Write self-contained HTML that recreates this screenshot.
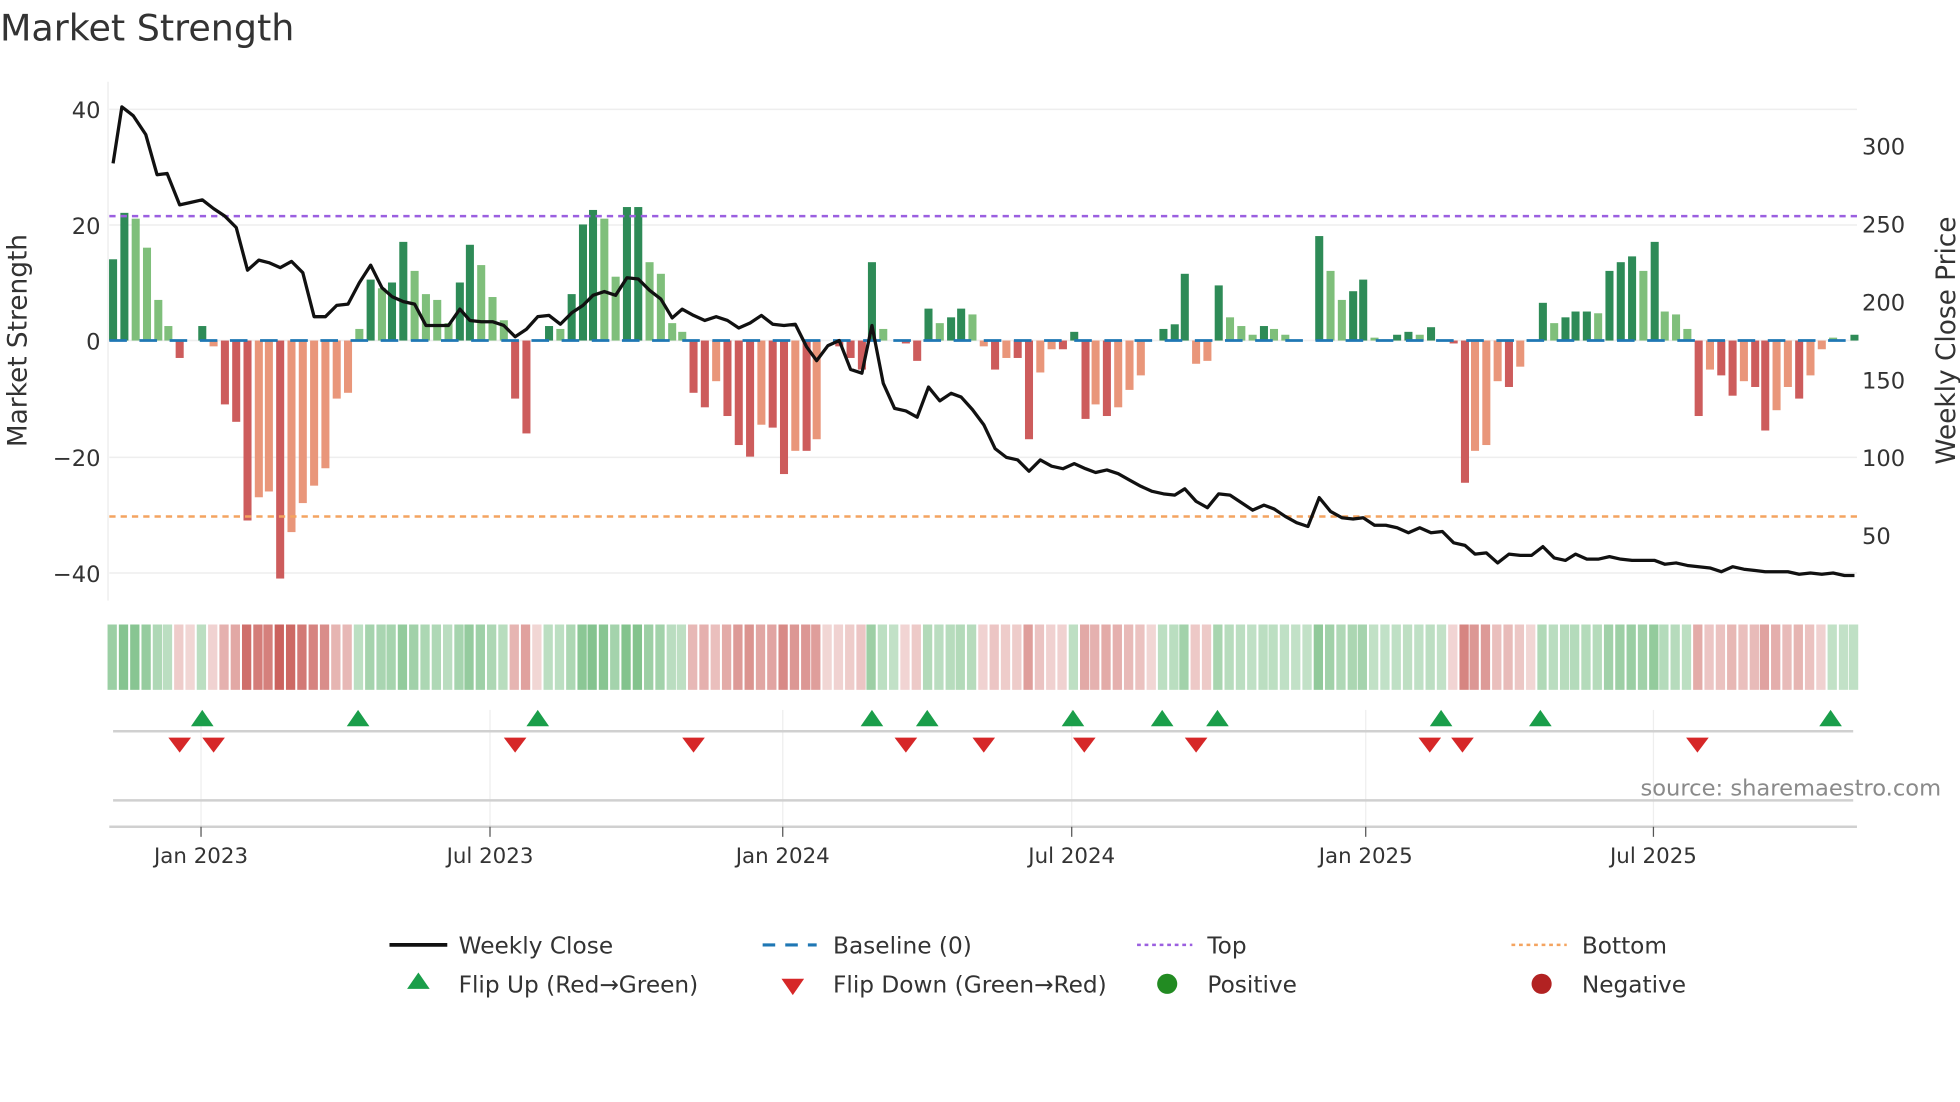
<!DOCTYPE html>
<html><head><meta charset="utf-8">
<style>
html,body{margin:0;padding:0;background:#fff;overflow:hidden}
svg{display:block}
text{font-family:"DejaVu Sans","Liberation Sans",sans-serif;fill:#333}
</style></head>
<body>
<svg id="s" width="1960" height="1102" viewBox="0 0 1560 877" xmlns="http://www.w3.org/2000/svg">
<rect width="1560" height="877" fill="#fff"/>
<text x="0" y="32" font-size="29" fill="#333">Market Strength</text>
<g id="grid"></g>
<g id="bars"></g>
<g id="heat"></g>
<g id="marks"></g>
<g id="axes"></g>
<g font-size="18.5">
<line x1="310" y1="752" x2="356" y2="752" stroke="#111" stroke-width="3"/>
<text x="365" y="759">Weekly Close</text>
<line x1="607" y1="752" x2="650" y2="752" stroke="#1f77b4" stroke-width="2.5" stroke-dasharray="10,8"/>
<text x="663" y="759">Baseline (0)</text>
<line x1="905" y1="752" x2="949" y2="752" stroke="#9b5fe0" stroke-width="2" stroke-dasharray="3,3"/>
<text x="961" y="759">Top</text>
<line x1="1203" y1="752" x2="1247" y2="752" stroke="#f4a460" stroke-width="2" stroke-dasharray="3,3"/>
<text x="1259" y="759">Bottom</text>
<polygon points="324,787 342,787 333,774" fill="#1a9e4a"/>
<text x="365" y="790">Flip Up (Red→Green)</text>
<polygon points="622,779 640,779 631,792" fill="#d62728"/>
<text x="663" y="790">Flip Down (Green→Red)</text>
<circle cx="929" cy="783" r="8" fill="#228b22"/>
<text x="961" y="790">Positive</text>
<circle cx="1227" cy="783" r="8" fill="#b22222"/>
<text x="1259" y="790">Negative</text>
</g>
<text x="1545" y="633" font-size="18" text-anchor="end" style="fill:#8a8a8a">source: sharemaestro.com</text>
<text transform="translate(21,271) rotate(-90)" font-size="21" text-anchor="middle">Market Strength</text>
<text transform="translate(1556,271) rotate(-90)" font-size="21" text-anchor="middle">Weekly Close Price</text>
</svg>
<script>
var NS="http://www.w3.org/2000/svg";
function el(p,t,a,txt){var e=document.createElementNS(NS,t);for(var k in a)e.setAttribute(k,a[k]);if(txt!=null)e.textContent=txt;document.getElementById(p).appendChild(e);return e;}
var Z=271,U=4.62;
[87,179,271,364,456].forEach(function(y){el("grid","line",{x1:87,x2:1478,y1:y,y2:y,stroke:"#eee","stroke-width":1.2});});
var lt=[["40",87],["20",179],["0",271],["\u221220",364],["\u221240",456]];
lt.forEach(function(a){el("axes","text",{x:80,y:a[1]+7,"font-size":18,"text-anchor":"end"},a[0]);});
var rt=[["300",116],["250",178],["200",240],["150",302],["100",364],["50",426]];
rt.forEach(function(a){el("axes","text",{x:1482,y:a[1]+7,"font-size":18},a[0]);});
el("axes","line",{x1:86,x2:86,y1:65,y2:478,stroke:"#eee","stroke-width":1.2});
var B=[[90,14],[99,22],[108,21],[117,16],[126,7],[134,2.5],[143,-3],[152,0],[161,2.5],[170,-1],[179,-11],[188,-14],[197,-31],[206,-27],[214,-26],[223,-41],[232,-33],[241,-28],[250,-25],[259,-22],[268,-10],[277,-9],[286,2],[295,10.5],[304,9],[312,10],[321,17],[330,12],[339,8],[348,7],[357,3],[366,10],[374,16.5],[383,13],[392,7.5],[401,3.5],[410,-10],[419,-16],[428,0],[437,2.5],[446,2],[455,8],[464,20],[472,22.5],[481,21],[490,11],[499,23],[508,23],[517,13.5],[526,11.5],[535,3],[543,1.5],[552,-9],[561,-11.5],[570,-7],[579,-13],[588,-18],[597,-20],[606,-14.5],[615,-15],[624,-23],[633,-19],[642,-19],[650,-17],[659,0],[668,-1],[677,-3],[686,-5],[694,13.5],[703,2],[712,0],[721,-0.5],[730,-3.5],[739,5.5],[748,3],[757,4],[765,5.5],[774,4.5],[783,-1],[792,-5],[801,-3],[810,-3],[819,-17],[828,-5.5],[837,-1.5],[846,-1.5],[855,1.5],[864,-13.5],[872,-11],[881,-13],[890,-11.5],[899,-8.5],[908,-6],[917,0],[926,2],[935,2.8],[943,11.5],[952,-4],[961,-3.5],[970,9.5],[979,4],[988,2.5],[997,1],[1006,2.5],[1014,2],[1023,1],[1032,0],[1041,0],[1050,18],[1059,12],[1068,7],[1077,8.5],[1085,10.5],[1094,0.5],[1103,0.2],[1112,1],[1121,1.5],[1130,1],[1139,2.3],[1148,0],[1157,-0.5],[1166,-24.5],[1174,-19],[1183,-18],[1192,-7],[1201,-8],[1210,-4.5],[1219,0],[1228,6.5],[1237,3],[1246,4],[1254,5],[1263,5],[1272,4.7],[1281,12],[1290,13.5],[1299,14.5],[1308,12],[1317,17],[1325,5],[1334,4.5],[1343,2],[1352,-13],[1361,-5],[1370,-6],[1379,-9.5],[1388,-7],[1397,-8],[1405,-15.5],[1414,-12],[1423,-8],[1432,-10],[1441,-6],[1450,-1.5],[1459,0.5],[1468,0],[1476,1]];
var prev=0,sign=1;
B.forEach(function(b,i){
  var v=b[1],x=b[0]-3.2,dark=Math.abs(v)>=Math.abs(prev);
  var c=v>=0?(dark?"#2e8b57":"#7fbf7b"):(dark?"#cd5c5c":"#e9967a");
  if(v!==0){var y=v>0?Z-v*U:Z,h=Math.abs(v)*U;el("bars","rect",{x:x,y:y,width:6.4,height:h,fill:c});}
  prev=v;
  if(v>0.1)sign=1;else if(v<-0.1)sign=-1;
  var m=Math.min(1,Math.abs(v)/35),hc;
  if(sign>0){var a=0.35+0.55*m;hc="rgba(80,170,95,"+a+")";}
  else{var a=0.25+0.7*m;hc="rgba(200,90,85,"+a+")";}
  el("heat","rect",{x:b[0]-4.4,y:497,width:7.4,height:52,fill:hc});
});
el("bars","line",{x1:87,x2:1478,y1:Z,y2:Z,stroke:"#1f77b4","stroke-width":2.2,"stroke-dasharray":"14,10"});
el("bars","line",{x1:87,x2:1478,y1:172,y2:172,stroke:"#9b5fe0","stroke-width":2,"stroke-dasharray":"5,4"});
el("bars","line",{x1:87,x2:1478,y1:411,y2:411,stroke:"#f4a460","stroke-width":2,"stroke-dasharray":"5,4"});
var P="90,130 97,85 106,92 116,107 125,139 133,138 143,163 152,161 161,159 170,166 179,172 188,181 197,215 206,207 214,209 223,213 232,208 241,217 250,252 259,252 268,243 277,242 286,225 295,211 304,229 312,236 321,240 330,242 339,259 348,259 357,259 366,246 374,255 383,256 392,256 401,259 410,268 419,262 428,252 437,251 446,258 455,249 464,243 472,235 481,232 490,235 499,221 508,222 517,231 526,238 535,253 543,246 552,251 561,255 570,252 579,255 588,261 597,257 606,251 615,258 624,259 633,258 642,276 650,287 659,275 668,271 677,294 686,297 694,259 703,305 712,325 721,327 730,332 739,308 748,319 757,313 765,316 774,326 783,338 792,357 801,364 810,366 819,375 828,366 837,371 846,373 855,369 864,373 872,376 881,374 890,377 899,382 908,387 917,391 926,393 935,394 943,389 952,399 961,404 970,393 979,394 988,400 997,406 1006,402 1014,405 1023,411 1032,416 1041,419 1050,396 1059,407 1068,412 1077,413 1085,412 1094,418 1103,418 1112,420 1121,424 1130,420 1139,424 1148,423 1157,432 1166,434 1174,441 1183,440 1192,448 1201,441 1210,442 1219,442 1228,435 1237,444 1246,446 1254,441 1263,445 1272,445 1281,443 1290,445 1299,446 1308,446 1317,446 1325,449 1334,448 1343,450 1352,451 1361,452 1370,455 1379,451 1388,453 1397,454 1405,455 1414,455 1423,455 1432,457 1441,456 1450,457 1459,456 1468,458 1476,458";
el("bars","polyline",{points:P,fill:"none",stroke:"#111","stroke-width":2.6,"stroke-linejoin":"round"});
var T=[["Jan 2023",160],["Jul 2023",390],["Jan 2024",623],["Jul 2024",853],["Jan 2025",1087],["Jul 2025",1316]];
T.forEach(function(t){
  el("marks","line",{x1:t[1],x2:t[1],y1:565,y2:658,stroke:"#eee","stroke-width":1});
  el("axes","line",{x1:t[1],x2:t[1],y1:658,y2:666,stroke:"#555","stroke-width":1});
  el("axes","text",{x:t[1],y:687,"font-size":17,"text-anchor":"middle"},t[0]);
});
el("marks","line",{x1:90,x2:1475,y1:582,y2:582,stroke:"#d0d0d0","stroke-width":2});
el("marks","line",{x1:90,x2:1475,y1:637,y2:637,stroke:"#d0d0d0","stroke-width":2});
el("marks","line",{x1:87,x2:1478,y1:658,y2:658,stroke:"#d0d0d0","stroke-width":2});
[161,285,428,694,738,854,925,969,1147,1226,1457].forEach(function(x){
  el("marks","polygon",{points:(x-9)+",578 "+(x+9)+",578 "+x+",565",fill:"#1a9e4a"});});
[143,170,410,552,721,783,863,952,1138,1164,1351].forEach(function(x){
  el("marks","polygon",{points:(x-9)+",587 "+(x+9)+",587 "+x+",599",fill:"#d62728"});});
</script>
</body></html>
